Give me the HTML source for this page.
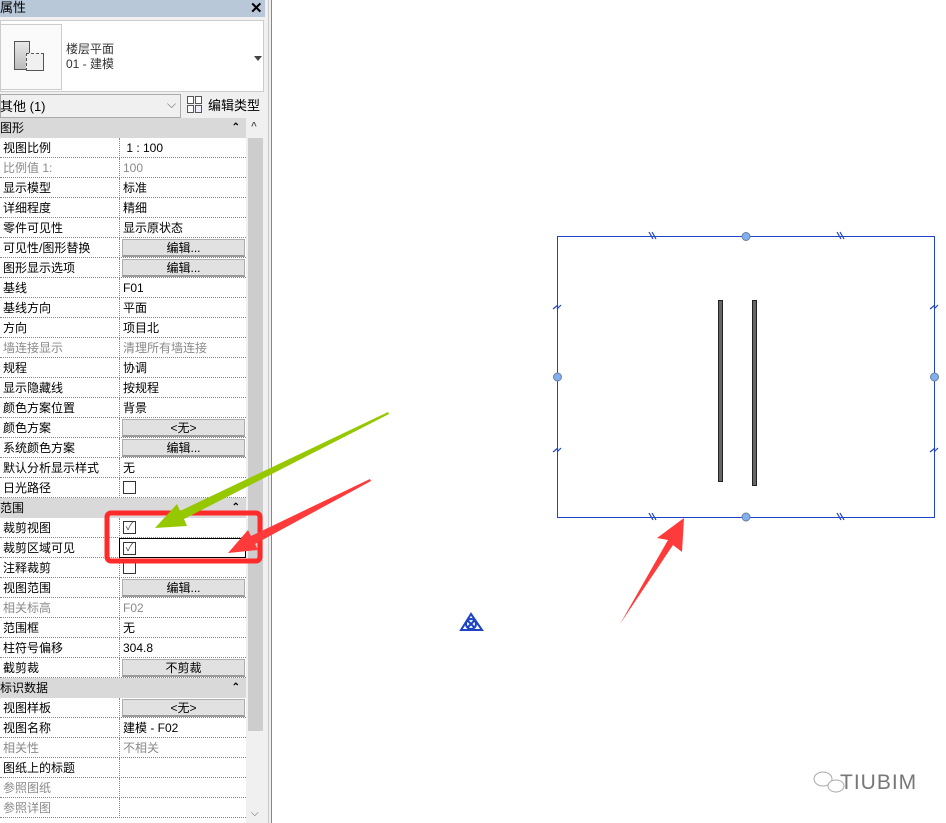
<!DOCTYPE html><html><head><meta charset="utf-8"><style>
*{margin:0;padding:0;box-sizing:border-box}
body{width:946px;height:823px;overflow:hidden;background:#fff;font-family:"Liberation Sans","Noto Sans CJK SC",sans-serif;font-size:12px;color:#000;position:relative}
.a{position:absolute}
.row{position:absolute;left:0;width:246px;height:20px;border-bottom:1px dotted #888}
.row .l{position:absolute;left:3px;top:2px;white-space:nowrap;line-height:17px}
.row .v{position:absolute;left:119px;top:0;width:127px;height:20px;border-left:1px dotted #888}
.row .v span{position:absolute;left:3px;top:2px;white-space:nowrap;line-height:17px}
.g{color:#8a8a8a}
.btn{position:absolute;left:2px;top:1px;right:1px;bottom:1px;background:#e1e1e1;border:1px solid #adadad;border-bottom:2px solid #9a9a9a;text-align:center;line-height:16px}
.hdr{position:absolute;left:0;width:246px;height:20px;background:#d9d9d9}
.hdr span{position:absolute;left:0;top:2px;line-height:17px}
.hdr i{position:absolute;right:6px;top:4px;font-style:normal;font-size:10px;font-weight:bold;line-height:12px}
.cb{position:absolute;left:3px;top:3px;width:13px;height:13px;border:1px solid #333;background:#fff}
</style></head><body>
<div class="a" style="left:0;top:0;width:272px;height:823px;background:#f0f0f0"></div>
<div class="a" style="left:0;top:0;width:265px;height:17px;background:#b9c8d9"></div>
<div class="a" style="left:0;top:-1px;font-size:13px;line-height:17px">属性</div>
<div class="a" style="left:250px;top:-1px;font-size:15px;font-weight:bold">✕</div>
<div class="a" style="left:0;top:20px;width:264px;height:72px;background:#fff;border:1px solid #ccc"></div>
<div class="a" style="left:0;top:24px;width:62px;height:66px;border:1px solid #ccc;background:#fafafa"></div>
<div class="a" style="left:14px;top:41px;width:16px;height:29px;border:1px solid #555;background:linear-gradient(#e8e8e8,#bbb)"></div>
<div class="a" style="left:26px;top:53px;width:18px;height:18px;border:1px dashed #555;border-right:1px solid #555;border-bottom:1px solid #555;background:#f0f0f0"></div>
<div class="a" style="left:66px;top:42px;color:#333;line-height:15px">楼层平面</div>
<div class="a" style="left:66px;top:57px;color:#333;line-height:15px">01 - 建模</div>
<div class="a" style="left:254px;top:56px;width:0;height:0;border-left:4px solid transparent;border-right:4px solid transparent;border-top:5px solid #444"></div>
<div class="a" style="left:0;top:94px;width:181px;height:24px;background:#f0f0f0;border:1px solid #aaa"></div>
<div class="a" style="left:0;top:98px;font-size:13px;line-height:17px">其他 (1)</div>
<div class="a" style="left:167px;top:97px;color:#666">⌵</div>
<svg class="a" style="left:186px;top:95px" width="18" height="20"><rect x="1.5" y="1.5" width="6" height="7" fill="#fff" stroke="#555"/><rect x="9.5" y="1.5" width="6" height="7" fill="#fff" stroke="#555"/><rect x="1.5" y="10.5" width="6" height="7" fill="#fff" stroke="#555"/><rect x="9.5" y="10.5" width="6" height="7" fill="#eef" stroke="#555"/></svg>
<div class="a" style="left:208px;top:97px;font-size:13px;line-height:17px">编辑类型</div>
<div class="a" style="left:248px;top:118px;width:15px;height:705px;background:#f0f0f0"></div>
<div class="a" style="left:248px;top:138px;width:15px;height:593px;background:#cdcdcd"></div>
<div class="a" style="left:251px;top:121px;font-size:10px;font-weight:bold;color:#555">^</div>
<div class="a" style="left:251px;top:808px;font-size:10px;color:#555">⌵</div>
<div class="a" style="left:268px;top:0;width:1px;height:823px;background:#c8c8c8"></div>
<div class="a" style="left:271px;top:0;width:1px;height:823px;background:#888"></div>
<div class="a" style="left:0;top:118px;width:246px;height:705px;background:#fff"></div>

<div class="hdr" style="top:118px"><span>图形</span><i>⌃</i></div>
<div class="row" style="top:138px"><span class="l">视图比例</span><div class="v"><span>&nbsp;1 : 100</span></div></div>
<div class="row" style="top:158px"><span class="l g">比例值 1:</span><div class="v"><span class="g">100</span></div></div>
<div class="row" style="top:178px"><span class="l">显示模型</span><div class="v"><span>标准</span></div></div>
<div class="row" style="top:198px"><span class="l">详细程度</span><div class="v"><span>精细</span></div></div>
<div class="row" style="top:218px"><span class="l">零件可见性</span><div class="v"><span>显示原状态</span></div></div>
<div class="row" style="top:238px"><span class="l">可见性/图形替换</span><div class="v"><div class="btn">编辑...</div></div></div>
<div class="row" style="top:258px"><span class="l">图形显示选项</span><div class="v"><div class="btn">编辑...</div></div></div>
<div class="row" style="top:278px"><span class="l">基线</span><div class="v"><span>F01</span></div></div>
<div class="row" style="top:298px"><span class="l">基线方向</span><div class="v"><span>平面</span></div></div>
<div class="row" style="top:318px"><span class="l">方向</span><div class="v"><span>项目北</span></div></div>
<div class="row" style="top:338px"><span class="l g">墙连接显示</span><div class="v"><span class="g">清理所有墙连接</span></div></div>
<div class="row" style="top:358px"><span class="l">规程</span><div class="v"><span>协调</span></div></div>
<div class="row" style="top:378px"><span class="l">显示隐藏线</span><div class="v"><span>按规程</span></div></div>
<div class="row" style="top:398px"><span class="l">颜色方案位置</span><div class="v"><span>背景</span></div></div>
<div class="row" style="top:418px"><span class="l">颜色方案</span><div class="v"><div class="btn">&lt;无&gt;</div></div></div>
<div class="row" style="top:438px"><span class="l">系统颜色方案</span><div class="v"><div class="btn">编辑...</div></div></div>
<div class="row" style="top:458px"><span class="l">默认分析显示样式</span><div class="v"><span>无</span></div></div>
<div class="row" style="top:478px"><span class="l">日光路径</span><div class="v"><div class="cb"></div></div></div>
<div class="hdr" style="top:498px"><span>范围</span><i>⌃</i></div>
<div class="row" style="top:518px"><span class="l">裁剪视图</span><div class="v"><div class="cb" style="text-align:center;line-height:11px;font-size:11px;color:#555">✓</div></div></div>
<div class="row" style="top:538px"><span class="l">裁剪区域可见</span><div class="v" style="border:1px solid #000"><div class="cb" style="text-align:center;line-height:11px;font-size:11px;color:#555">✓</div></div></div>
<div class="row" style="top:558px"><span class="l">注释裁剪</span><div class="v"><div class="cb"></div></div></div>
<div class="row" style="top:578px"><span class="l">视图范围</span><div class="v"><div class="btn">编辑...</div></div></div>
<div class="row" style="top:598px"><span class="l g">相关标高</span><div class="v"><span class="g">F02</span></div></div>
<div class="row" style="top:618px"><span class="l">范围框</span><div class="v"><span>无</span></div></div>
<div class="row" style="top:638px"><span class="l">柱符号偏移</span><div class="v"><span>304.8</span></div></div>
<div class="row" style="top:658px"><span class="l">截剪裁</span><div class="v"><div class="btn">不剪裁</div></div></div>
<div class="hdr" style="top:678px"><span>标识数据</span><i>⌃</i></div>
<div class="row" style="top:698px"><span class="l">视图样板</span><div class="v"><div class="btn">&lt;无&gt;</div></div></div>
<div class="row" style="top:718px"><span class="l">视图名称</span><div class="v"><span>建模 - F02</span></div></div>
<div class="row" style="top:738px"><span class="l g">相关性</span><div class="v"><span class="g">不相关</span></div></div>
<div class="row" style="top:758px"><span class="l">图纸上的标题</span><div class="v"></div></div>
<div class="row" style="top:778px"><span class="l g">参照图纸</span><div class="v"></div></div>
<div class="row" style="top:798px"><span class="l g">参照详图</span><div class="v"></div></div>

<svg class="a" style="left:0;top:0" width="946" height="823">
<rect x="557.5" y="236.5" width="377" height="281" fill="none" stroke="#1c44c4" stroke-width="1"/>
<g stroke="#1c44c4" stroke-width="1.2">
<path d="M649 232l4 7M652 232l4 7M837 232l4 7M840 232l4 7M649 513l4 7M652 513l4 7M837 513l4 7M840 513l4 7"/>
<path d="M553 309l5-4M557 309l4-4M553 452l5-4M557 452l4-4M930 309l5-4M934 309l4-4M930 452l5-4M934 452l4-4"/>
</g>
<g fill="#7fb1f0" stroke="#6f7f99"><circle cx="746" cy="236.5" r="4"/><circle cx="746" cy="517" r="4"/><circle cx="557.5" cy="377" r="4"/><circle cx="934.5" cy="377" r="4"/></g>
<rect x="718.5" y="300.5" width="4" height="181" fill="#666" stroke="#222"/>
<rect x="752.5" y="300.5" width="4" height="185" fill="#666" stroke="#222"/>
<g fill="none" stroke="#1c44c4" stroke-width="2"><path d="M461 630L471 614L482 630Z"/><circle cx="471" cy="624" r="5"/><path d="M467 620l8 8M475 620l-8 8"/></g>
<rect x="107" y="513" width="153" height="48" rx="4" fill="none" stroke="#ff2a2a" stroke-width="5"/>
<path d="M388 412L180 511L177 504L155 528L187 526L184 519L389 414Z" fill="#96c800"/>
<path d="M620 624L668 540L657 538L684 518L682 552L673 545Z" fill="#ff3a3a"/>
<path d="M370 479L251 536L248 530L228 553L258 550L255 544L371 481Z" fill="#ff3a3a"/>
<g fill="#fff" stroke="#aaa"><ellipse cx="823" cy="779" rx="9" ry="7"/><ellipse cx="836" cy="786" rx="8" ry="6"/></g>
</svg>
<div class="a" style="left:840px;top:771px;font-size:21px;color:#777;letter-spacing:1px">TIUBIM</div>
</body></html>
